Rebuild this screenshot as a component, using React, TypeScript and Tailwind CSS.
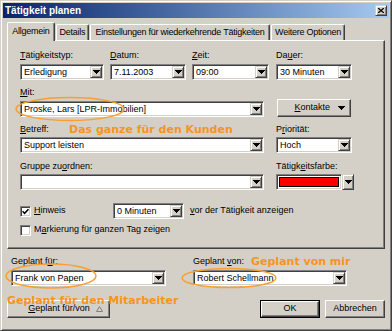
import React from "react";

const sunken =
  "border border-t-[#808080] border-l-[#808080] border-b-white border-r-white shadow-[inset_1px_1px_0_#404040,inset_-1px_-1px_0_#d4d0c8]";
const raised =
  "border border-t-white border-l-white border-b-[#404040] border-r-[#404040] shadow-[inset_-1px_-1px_0_#808080]";
const smallBtn =
  "border border-t-[#d4d0c8] border-l-[#d4d0c8] border-b-[#404040] border-r-[#404040] shadow-[inset_1px_1px_0_#fff,inset_-1px_-1px_0_#808080] bg-[#d4d0c8]";

function Arrow() {
  return (
    <svg width="7" height="4" viewBox="0 0 7 4">
      <path d="M0 0h7v1h-1v1h-1v1h-1v1h-1v-1h-1v-1h-1v-1h-1z" fill="#000" />
    </svg>
  );
}

function Combo({ value, className = "" }: { value?: string; className?: string }) {
  return (
    <div className={`${sunken} bg-white h-[16px] p-[1px] flex ${className}`}>
      <span className="flex-1 min-w-0 pl-[2px] text-[9px] leading-[12px] whitespace-nowrap overflow-hidden">
        {value}
      </span>
      <div className={`${smallBtn} w-[12px] h-[12px] flex items-center justify-center`}>
        <Arrow />
      </div>
    </div>
  );
}

function Label({ children }: { children: React.ReactNode }) {
  return <div className="h-[11px] text-[9px] leading-[11px] whitespace-nowrap">{children}</div>;
}

function CheckBox({ checked }: { checked?: boolean }) {
  return (
    <div className={`${sunken} bg-white w-[11px] h-[11px] flex items-center justify-center shrink-0`}>
      {checked && (
        <svg width="7" height="7" viewBox="0 0 7 7">
          <path d="M0.5 3.2 L2.6 5.3 L6.5 1.2" stroke="#000" strokeWidth="1.6" fill="none" />
        </svg>
      )}
    </div>
  );
}

const tabs = [
  { name: "Details", w: "w-[33px]", ml: "ml-[1px]" },
  { name: "Einstellungen für wiederkehrende Tätigkeiten", w: "w-[180px]", ml: "ml-[1px]" },
  { name: "Weitere Optionen", w: "w-[74px]", ml: "ml-[1px]" },
];

export default function App() {
  return (
    <div className="relative w-[392px] h-[331px] bg-[#d4d0c8] border border-t-[#d4d0c8] border-l-[#d4d0c8] border-b-[#404040] border-r-[#404040] shadow-[inset_1px_1px_0_#fff,inset_-1px_-1px_0_#808080] p-[2px] font-['Liberation_Sans',Arial,sans-serif] text-black overflow-hidden">
      {/* Title bar */}
      <div className="h-[15px] flex items-start justify-between bg-gradient-to-r from-[#0a246a] to-[#a6caf0]">
        <span className="pl-[2px] text-[10px] leading-[15px] font-bold text-white">Tätigkeit planen</span>
        <div className={`${smallBtn} mt-[2px] mr-[2px] w-[12px] h-[11px] flex items-center justify-center`}>
          <svg width="6" height="5" viewBox="0 0 6 5">
            <path d="M0 0 L6 5 M6 0 L0 5" stroke="#000" strokeWidth="1.3" />
          </svg>
        </div>
      </div>

      {/* Tabs */}
      <div className="mt-[4px] h-[18px] pl-[4px] flex items-end text-[9px] tracking-[-0.25px]">
        <div className="relative z-10 h-[19px] mb-[-1px] w-[48px] bg-[#d4d0c8] border-t border-l border-r border-t-white border-l-white border-r-[#404040] shadow-[inset_-1px_0_0_#808080] rounded-t-[2px] flex justify-center pt-[3px] leading-[11px]">
          Allgemein
        </div>
        {tabs.map((t) => (
          <div
            key={t.name}
            className={`${t.w} ${t.ml} h-[16px] border-t border-l border-r border-t-white border-l-white border-r-[#404040] shadow-[inset_-1px_0_0_#808080] rounded-t-[2px] flex justify-center pt-[2px] leading-[11px] whitespace-nowrap`}
          >
            {t.name}
          </div>
        ))}
      </div>

      {/* Panel */}
      <div className={`${raised} ml-[4px] w-[378px] h-[209px] pl-[12px] pt-[9px] flex flex-col`}>
        <div className="flex">
          <div className="w-[84px]">
            <Label><u>T</u>ätigkeitstyp:</Label>
            <Combo className="mt-[3px]" value="Erledigung" />
          </div>
          <div className="w-[76px] ml-[6px]">
            <Label><u>D</u>atum:</Label>
            <Combo className="mt-[3px]" value="7.11.2003" />
          </div>
          <div className="w-[77px] ml-[6px]">
            <Label><u>Z</u>eit:</Label>
            <Combo className="mt-[3px]" value="09:00" />
          </div>
          <div className="w-[76px] ml-[7px]">
            <Label>Da<u>u</u>er:</Label>
            <Combo className="mt-[3px]" value="30 Minuten" />
          </div>
        </div>

        <div className="mt-[7px]">
          <Label><u>M</u>it:</Label>
          <div className="flex items-end">
            <Combo className="mt-[3px] w-[244px]" value="Proske, Lars [LPR-Immobilien]" />
            <div className={`${raised} bg-[#d4d0c8] ml-[13px] w-[74px] h-[18px] flex items-center justify-end pr-[5px] gap-[8px] text-[9px]`}>
              <span><u>K</u>ontakte</span>
              <Arrow />
            </div>
          </div>
        </div>

        <div className="mt-[7px] flex">
          <div className="w-[244px]">
            <Label><u>B</u>etreff:</Label>
            <Combo className="mt-[2px]" value="Support leisten" />
          </div>
          <div className="w-[76px] ml-[12px]">
            <Label>P<u>r</u>iorität:</Label>
            <Combo className="mt-[2px]" value="Hoch" />
          </div>
        </div>

        <div className="mt-[8px] flex">
          <div className="w-[244px]">
            <Label>Gruppe zu<u>o</u>rdnen:</Label>
            <Combo className="mt-[2px]" />
          </div>
          <div className="w-[78px] ml-[12px]">
            <Label>Tätigk<u>e</u>itsfarbe:</Label>
            <div className="mt-[2px] flex h-[16px]">
              <div className={`${sunken} bg-white flex-1 p-[2px]`}>
                <div className="h-full bg-[#ff0000] border border-black" />
              </div>
              <div className={`${smallBtn} w-[12px] flex items-center justify-center`}>
                <Arrow />
              </div>
            </div>
          </div>
        </div>

        <div className="mt-[13px] h-[16px] flex items-center text-[9px]">
          <div className="w-[93px] flex items-center">
            <CheckBox checked />
            <span className="ml-[3px]"><u>H</u>inweis</span>
          </div>
          <Combo className="w-[71px]" value="0 Minuten" />
          <span className="ml-[6px] whitespace-nowrap"><u>v</u>or der Tätigkeit anzeigen</span>
        </div>

        <div className="mt-[5px] h-[12px] flex items-center text-[9px]">
          <CheckBox />
          <span className="ml-[3px]">M<u>a</u>rkierung für ganzen Tag zeigen</span>
        </div>
      </div>

      {/* Bottom */}
      <div className="mt-[7px] pl-[8px] flex">
        <div className="w-[155px]">
          <Label>Geplant f<u>ü</u>r:</Label>
          <Combo className="mt-[3px]" value="Frank von Papen" />
        </div>
        <div className="w-[154px] ml-[27px]">
          <Label>Geplant <u>v</u>on:</Label>
          <Combo className="mt-[3px]" value="Robert Schellmann" />
        </div>
      </div>

      <div className="mt-[14px] flex text-[9px]">
        <div className={`${raised} ml-[4px] w-[103px] h-[18px] flex items-center justify-center gap-[6px] pl-[14px]`}>
          <span><u>G</u>eplant für/von</span>
          <svg width="7" height="6" viewBox="0 0 7 6">
            <path d="M3.5 0.5 L6.5 5.5 L0.5 5.5 Z" fill="none" stroke="#808080" strokeWidth="1" />
          </svg>
        </div>
        <div className="ml-auto border border-black">
          <div className={`${raised} w-[58px] h-[16px] flex items-center justify-center`}>OK</div>
        </div>
        <div className={`${raised} ml-[5px] mr-[4px] w-[60px] h-[18px] flex items-center justify-center`}>
          Abbrechen
        </div>
      </div>

      {/* Annotations */}
      <svg className="absolute left-0 top-0 pointer-events-none" width="392" height="331">
        <ellipse cx="69" cy="108" rx="54" ry="11.5" fill="none" stroke="#f7a030" strokeWidth="1.5" />
        <ellipse cx="50" cy="275" rx="45" ry="12" fill="none" stroke="#f7a030" strokeWidth="1.5" />
        <ellipse cx="228" cy="277" rx="47" ry="9.5" fill="none" stroke="#f7a030" strokeWidth="1.5" />
      </svg>
      <div className="absolute left-[68px] top-[123px] text-[11px] leading-[11px] font-bold text-[#f7941d] font-['DejaVu_Sans',sans-serif] whitespace-nowrap">
        Das ganze für den Kunden
      </div>
      <div className="absolute left-[250px] top-[255px] text-[11px] leading-[11px] font-bold text-[#f7941d] font-['DejaVu_Sans',sans-serif] whitespace-nowrap">
        Geplant von mir
      </div>
      <div className="absolute left-[6px] top-[294px] text-[11px] leading-[11px] font-bold text-[#f7941d] font-['DejaVu_Sans',sans-serif] whitespace-nowrap">
        Geplant für den Mitarbeiter
      </div>
    </div>
  );
}
